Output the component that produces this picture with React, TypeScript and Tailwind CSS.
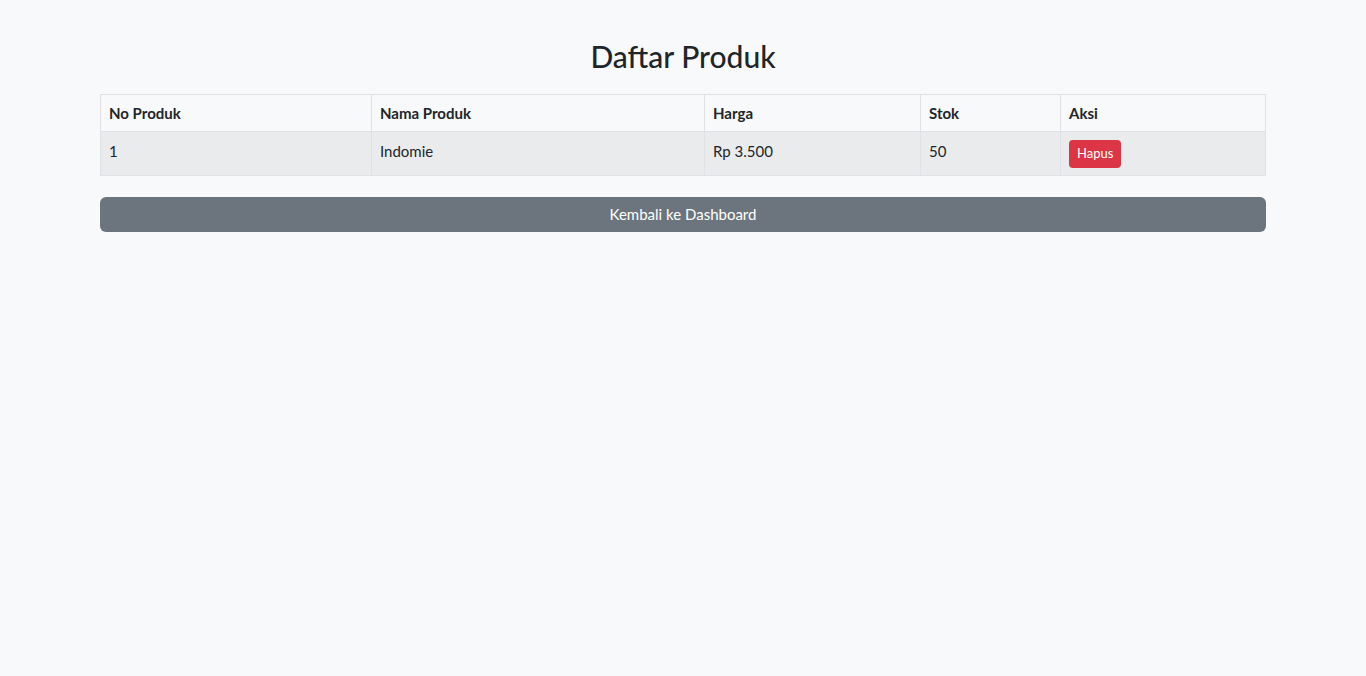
import React from 'react';

const produk = [{ no: 1, nama: 'Indomie', harga: 'Rp 3.500', stok: 50 }];

export default function App() {
  return (
    <div className="min-h-[676px] bg-[#f8f9fa] text-[#212529] font-['Lato','Noto_Sans',sans-serif]">
      <div className="mx-auto w-[1166px] pt-[36px]">
        <h2 className="text-center text-[30px] font-medium leading-[40px] mb-[18px]">Daftar Produk</h2>

        <table className="w-full border-collapse border border-[#dee2e6] text-[15px]">
          <thead>
            <tr className="bg-[#f8f9fa] h-[37px]">
              <th className="w-[271px] border border-[#dee2e6] px-2 text-left font-bold">No Produk</th>
              <th className="w-[333px] border border-[#dee2e6] px-2 text-left font-bold">Nama Produk</th>
              <th className="w-[216px] border border-[#dee2e6] px-2 text-left font-bold">Harga</th>
              <th className="w-[140px] border border-[#dee2e6] px-2 text-left font-bold">Stok</th>
              <th className="border border-[#dee2e6] px-2 text-left font-bold">Aksi</th>
            </tr>
          </thead>
          <tbody>
            {produk.map((p) => (
              <tr key={p.no} className="bg-[#eaebed] h-[44px]">
                <td className="border border-[#dee2e6] px-2 align-top pt-[8px]">{p.no}</td>
                <td className="border border-[#dee2e6] px-2 align-top pt-[8px]">{p.nama}</td>
                <td className="border border-[#dee2e6] px-2 align-top pt-[8px]">{p.harga}</td>
                <td className="border border-[#dee2e6] px-2 align-top pt-[8px]">{p.stok}</td>
                <td className="border border-[#dee2e6] px-2 align-top pt-2">
                  <button className="h-[28px] rounded-[4px] bg-[#dc3545] px-2 text-[13px] text-white">Hapus</button>
                </td>
              </tr>
            ))}
          </tbody>
        </table>

        <button className="mt-[21px] h-[35px] w-full rounded-[6px] bg-[#6c757d] text-[15px] text-white">
          Kembali ke Dashboard
        </button>
      </div>
    </div>
  );
}
